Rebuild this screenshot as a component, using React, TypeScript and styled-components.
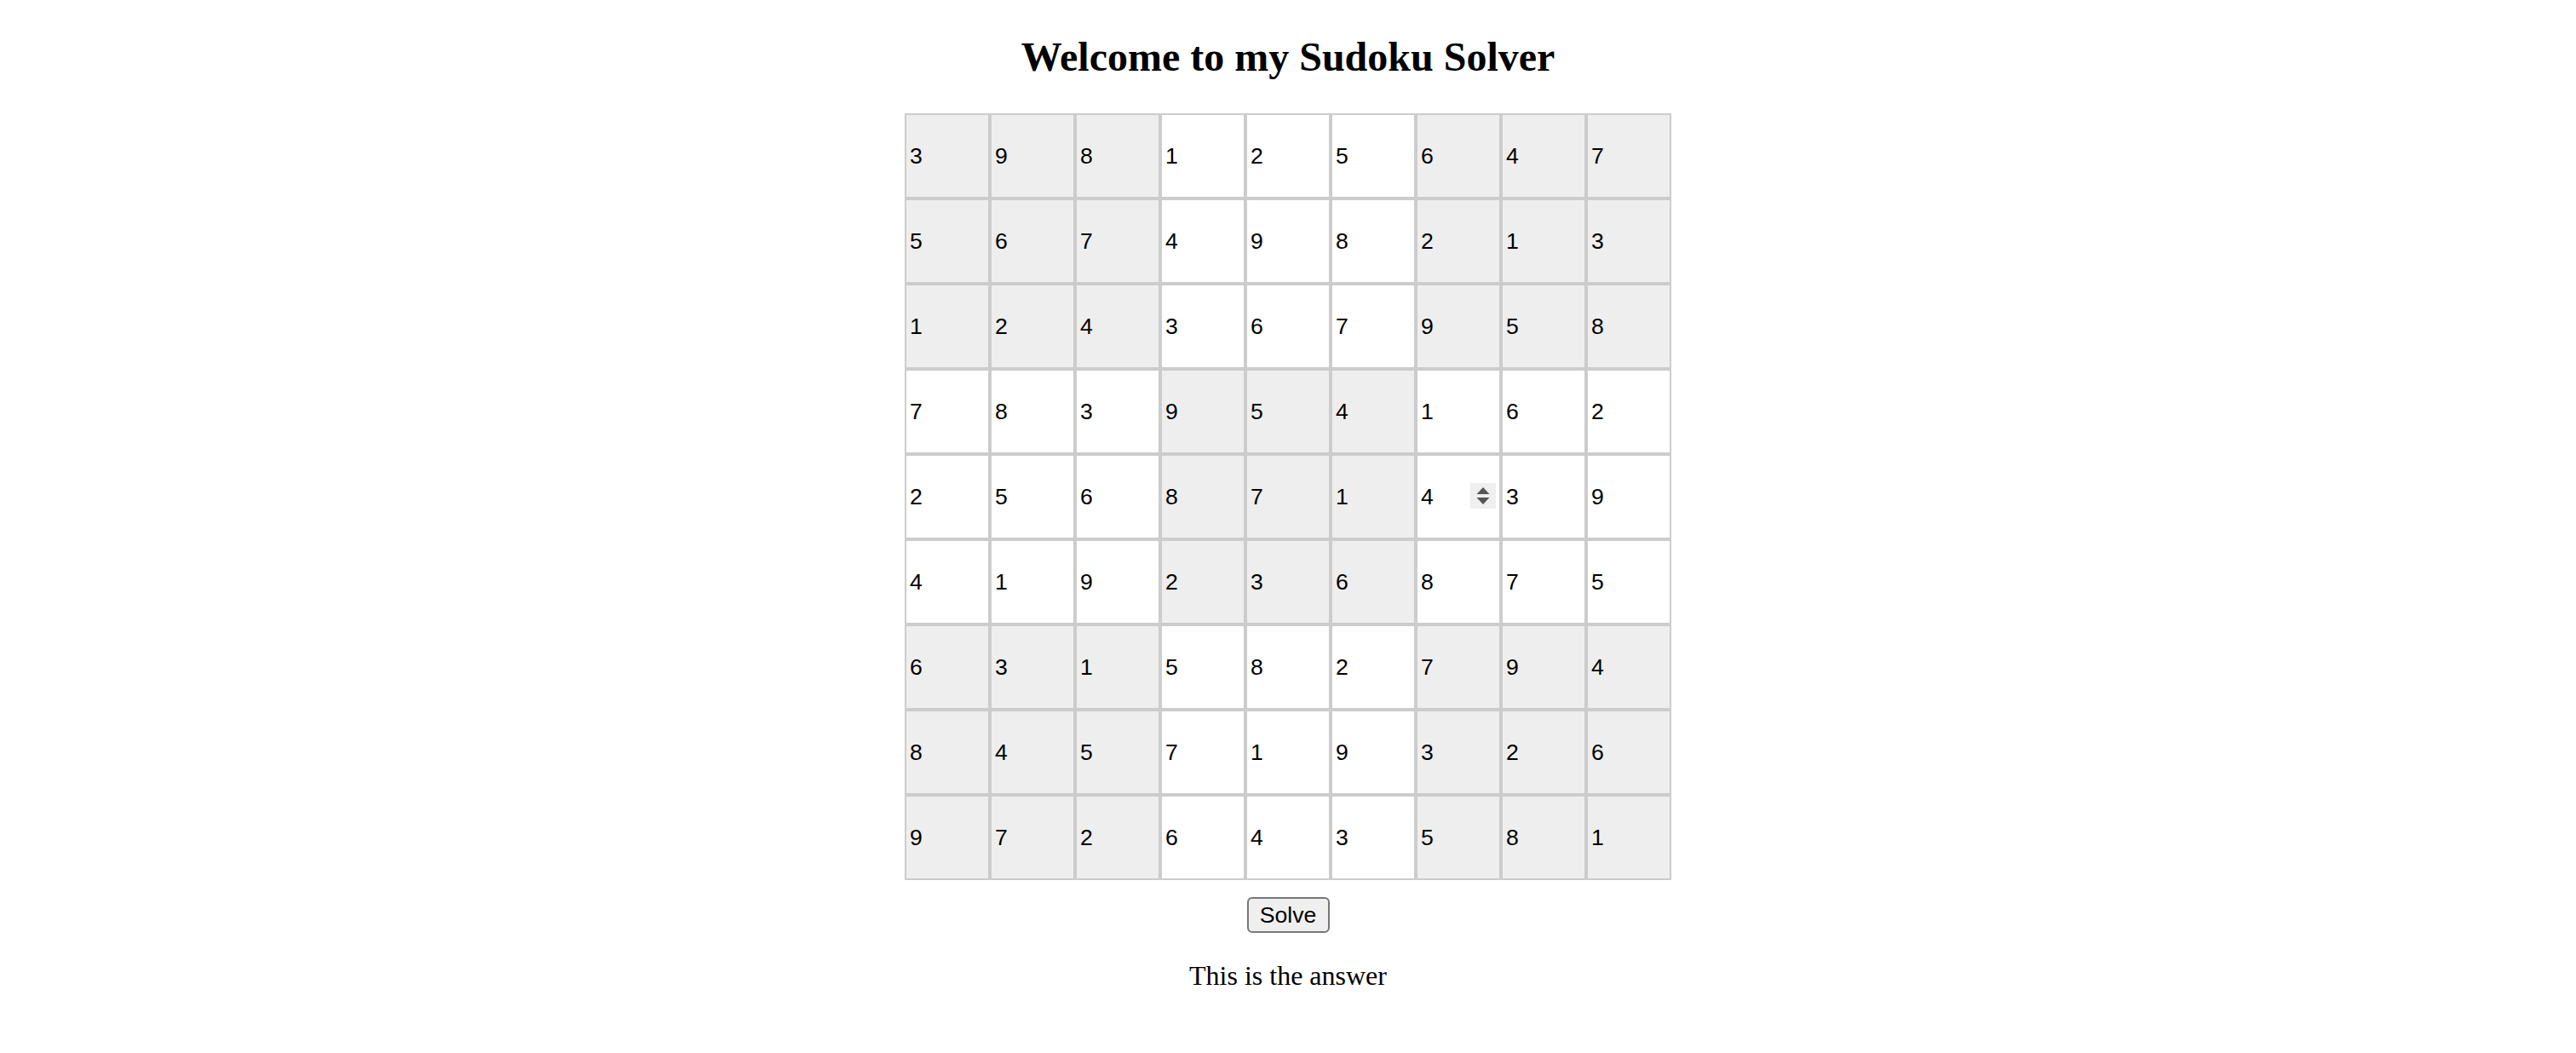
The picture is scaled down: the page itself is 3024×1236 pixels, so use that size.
import React from 'react';
import styled, {createGlobalStyle} from 'styled-components';

const GlobalStyle = createGlobalStyle`
  html, body {
    margin: 0;
    padding: 0;
    background: #fff;
  }
  body {
    font-family: "Liberation Serif", "Times New Roman", serif;
    color: #000;
  }
`;

const board = [
  [3, 9, 8, 1, 2, 5, 6, 4, 7],
  [5, 6, 7, 4, 9, 8, 2, 1, 3],
  [1, 2, 4, 3, 6, 7, 9, 5, 8],
  [7, 8, 3, 9, 5, 4, 1, 6, 2],
  [2, 5, 6, 8, 7, 1, 4, 3, 9],
  [4, 1, 9, 2, 3, 6, 8, 7, 5],
  [6, 3, 1, 5, 8, 2, 7, 9, 4],
  [8, 4, 5, 7, 1, 9, 3, 2, 6],
  [9, 7, 2, 6, 4, 3, 5, 8, 1],
];

const Page = styled.div`
  display: flex;
  flex-direction: column;
  align-items: center;
`;

const Title = styled.h2`
  margin: 40px 0;
  font-size: 48px;
  font-weight: bold;
  line-height: 53px;
`;

const Board = styled.div`
  display: grid;
  grid-template-columns: repeat(9, 100px);
  grid-auto-rows: 100px;
`;

const Slot = styled.div`
  position: relative;
`;

const Cell = styled.input<{ $shaded: boolean }>`
  box-sizing: border-box;
  width: 100px;
  height: 100px;
  margin: 0;
  padding: 0 4px;
  border: 2px solid #ccc;
  background: ${p => (p.$shaded ? '#eee' : '#fff')};
  font-family: "Liberation Sans", Arial, sans-serif;
  font-size: 26.67px;
  color: #000;
  outline: none;
`;

const Spinner = styled.div`
  position: absolute;
  right: 6px;
  top: 34px;
  width: 30px;
  height: 30px;
  background: #efefef;
  display: flex;
  align-items: center;
  justify-content: center;
`;

const SolveButton = styled.button`
  margin-top: 20px;
  width: 97px;
  height: 42px;
  padding: 0;
  border: 2px solid #767676;
  border-radius: 6px;
  background: #efefef;
  font-family: "Liberation Sans", Arial, sans-serif;
  font-size: 26.67px;
  color: #000;
`;

const Answer = styled.p`
  margin: 32px 0;
  font-size: 32px;
`;

const isShaded = (r: number, c: number) =>
  (Math.floor(r / 3) + Math.floor(c / 3)) % 2 === 0;

function App() {
  return (
    <Page>
      <GlobalStyle />
      <Title>Welcome to my Sudoku Solver</Title>
      <Board>
        {board.map((row, r) =>
          row.map((v, c) => (
            <Slot key={`${r}-${c}`}>
              <Cell type="text" readOnly value={v} $shaded={isShaded(r, c)} />
              {r === 4 && c === 6 && (
                <Spinner>
                  <svg width="16" height="24" viewBox="0 0 16 24">
                    <polygon points="8,2 15.5,10 0.5,10" fill="#555" />
                    <polygon points="0.5,14 15.5,14 8,22" fill="#555" />
                  </svg>
                </Spinner>
              )}
            </Slot>
          ))
        )}
      </Board>
      <SolveButton>Solve</SolveButton>
      <Answer>This is the answer</Answer>
    </Page>
  );
}

export default App;
